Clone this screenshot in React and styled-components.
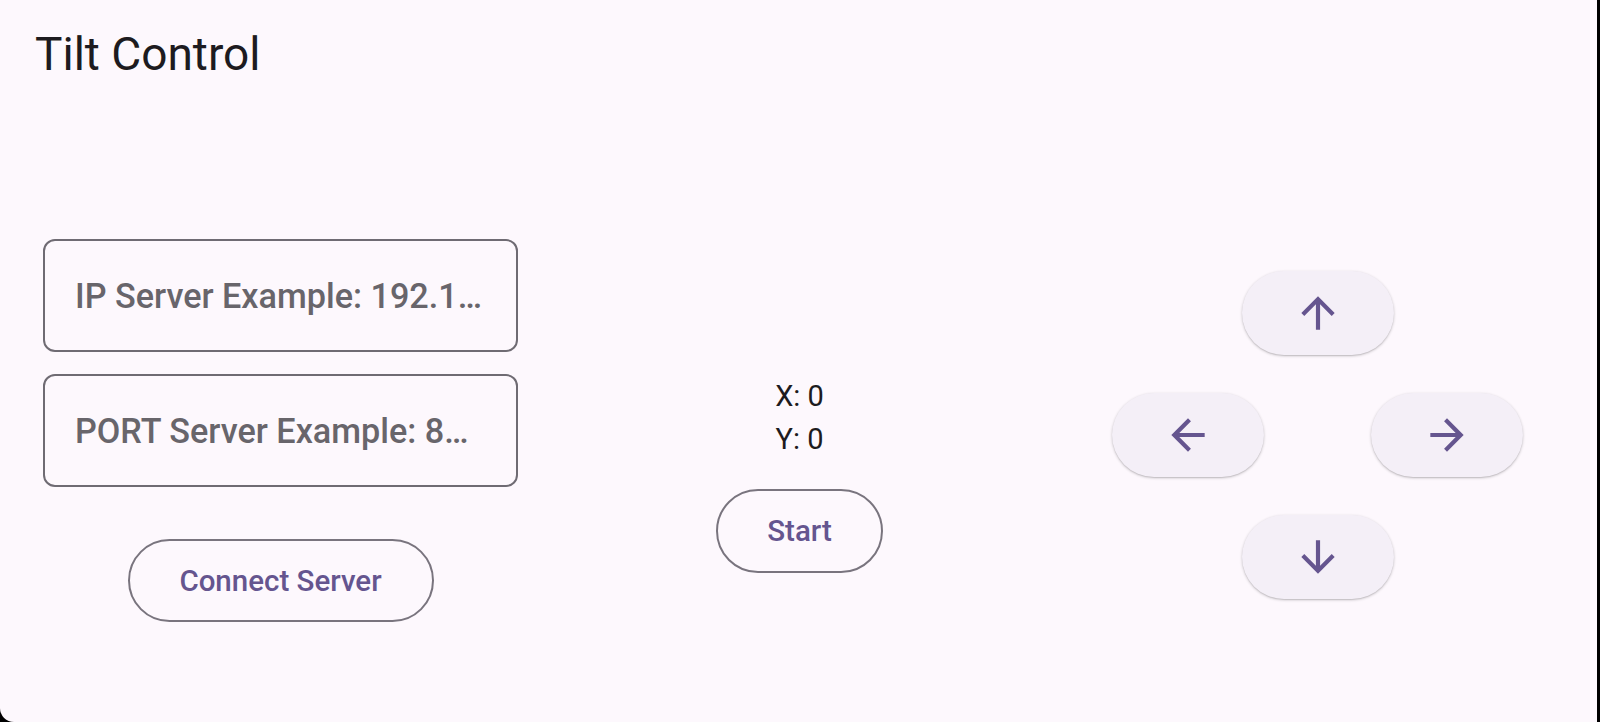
import styled, { createGlobalStyle } from "styled-components";
import {
  MdArrowUpward,
  MdArrowDownward,
  MdArrowBack,
  MdArrowForward,
} from "react-icons/md";

const GlobalStyle = createGlobalStyle`
  html, body {
    margin: 0;
    padding: 0;
    background: #000;
  }
  * {
    box-sizing: border-box;
  }
`;

const Page = styled.div`
  width: 1597px;
  height: 722px;
  background: #fdf8fd;
  border-bottom-left-radius: 14px;
  font-family: Roboto, "Noto Sans", sans-serif;
  display: flex;
  flex-direction: column;
  overflow: hidden;
`;

const Header = styled.header`
  height: 107px;
  padding: 0 35px;
  display: flex;
  align-items: center;
`;

const Title = styled.h1`
  margin: 0;
  font-size: 46px;
  font-weight: 400;
  line-height: 1;
  color: #1d1b20;
`;

const Body = styled.main`
  display: flex;
  align-items: flex-start;
  padding: 132px 0 0 43px;
`;

const LeftCol = styled.div`
  width: 475px;
  display: flex;
  flex-direction: column;
  align-items: center;
  gap: 22px;
`;

const Field = styled.input`
  width: 100%;
  height: 113px;
  padding: 0 30px;
  border: 2px solid #6f6b73;
  border-radius: 12px;
  background: transparent;
  font-family: inherit;
  font-size: 34.2px;
  font-weight: 500;
  color: #1d1b20;
  outline: none;

  &::placeholder {
    color: #68656b;
  }
`;

const OutlineButton = styled.button`
  width: ${({ $w }) => $w}px;
  height: ${({ $h }) => $h}px;
  margin-top: ${({ $mt }) => $mt || 0}px;
  border: 2px solid #79747e;
  border-radius: 999px;
  background: transparent;
  font-family: inherit;
  font-size: 29.5px;
  font-weight: 500;
  color: #65558f;
  cursor: pointer;
`;

const MiddleCol = styled.div`
  width: 167px;
  margin: 136px 0 0 198px;
  display: flex;
  flex-direction: column;
  align-items: center;
`;

const Coord = styled.div`
  font-size: 29px;
  line-height: 43px;
  color: #1d1b20;
`;

const Pad = styled.div`
  width: 411px;
  margin: 32px 0 0 229px;
  display: flex;
  flex-direction: column;
  align-items: center;
  gap: 38px;
`;

const PadRow = styled.div`
  width: 100%;
  display: flex;
  justify-content: space-between;
`;

const ArrowButton = styled.button`
  width: 152px;
  height: 84px;
  border: none;
  border-radius: 999px;
  background: #f4eff7;
  color: #65558f;
  display: flex;
  align-items: center;
  justify-content: center;
  box-shadow: 0 1px 3px rgba(0, 0, 0, 0.22), 0 1px 1px rgba(0, 0, 0, 0.08);
  cursor: pointer;

  svg {
    width: 50px;
    height: 50px;
  }
`;

const App = () => {
  return (
    <>
      <GlobalStyle />
      <Page>
        <Header>
          <Title>Tilt Control</Title>
        </Header>
        <Body>
          <LeftCol>
            <Field placeholder="IP Server Example: 192.1…" />
            <Field placeholder="PORT Server Example: 8…" />
            <OutlineButton $w={306} $h={83} $mt={30}>
              Connect Server
            </OutlineButton>
          </LeftCol>

          <MiddleCol>
            <Coord>X: 0</Coord>
            <Coord>Y: 0</Coord>
            <OutlineButton $w={167} $h={84} $mt={28}>
              Start
            </OutlineButton>
          </MiddleCol>

          <Pad>
            <ArrowButton aria-label="up">
              <MdArrowUpward />
            </ArrowButton>
            <PadRow>
              <ArrowButton aria-label="left">
                <MdArrowBack />
              </ArrowButton>
              <ArrowButton aria-label="right">
                <MdArrowForward />
              </ArrowButton>
            </PadRow>
            <ArrowButton aria-label="down">
              <MdArrowDownward />
            </ArrowButton>
          </Pad>
        </Body>
      </Page>
    </>
  );
};

export default App;
